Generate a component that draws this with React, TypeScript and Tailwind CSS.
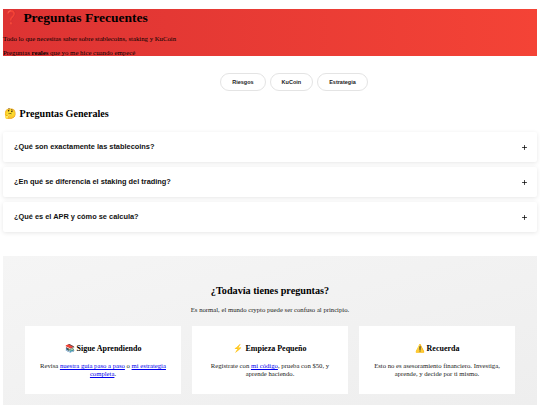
import React from 'react';
import { Plus } from 'lucide-react';

const pills = ['Riesgos', 'KuCoin', 'Estrategia'];

const questions = [
  '¿Qué son exactamente las stablecoins?',
  '¿En qué se diferencia el staking del trading?',
  '¿Qué es el APR y cómo se calcula?',
];

const linkClass = 'text-[#0000ee] underline';

const InfoCard = ({ icon, title, children }: { icon: string; title: string; children: React.ReactNode }) => (
  <div className="bg-white h-[68px] pt-[17px] px-[12px] text-center">
    <h3 className="font-bold text-[8px] leading-[12px] text-black mb-[7px]">
      {icon} {title}
    </h3>
    <p className="text-[6.7px] leading-[8px] text-[#222]">{children}</p>
  </div>
);

export default function App() {
  return (
    <div className="w-[540px] h-[405px] overflow-hidden bg-white font-['Liberation_Serif',serif] text-black">
      <div className="h-[9px]" />
      <header className="mx-[3px] h-[47px] bg-gradient-to-r from-[#dd3333] to-[#f44336]">
        <h1 className="font-bold text-[13.5px] leading-[17px] h-[17px]">
          <span className="text-[#f4544f]">❓</span> Preguntas Frecuentes
        </h1>
        <p className="text-[6.75px] leading-[8px] mt-[9px]">Todo lo que necesitas saber sobre stablecoins, staking y KuCoin</p>
        <p className="text-[6.8px] leading-[8px] mt-[6px]">
          Preguntas <b>reales</b> que yo me hice cuando empecé
        </p>
      </header>

      <nav className="flex justify-center gap-[4px] mt-[17px] pl-[48px] font-['Liberation_Sans',sans-serif]">
        {pills.map(p => (
          <span
            key={p}
            className="h-[18px] px-[11px] flex items-center rounded-full border border-[#e4e4e4] text-[5.5px] font-bold text-[#222]"
          >
            {p}
          </span>
        ))}
      </nav>

      <h2 className="mx-[4px] mt-[15px] font-bold text-[10.1px] leading-[16px]">🤔 Preguntas Generales</h2>

      <div className="mx-[3px] mt-[10px] flex flex-col gap-[5px] font-['Liberation_Sans',sans-serif]">
        {questions.map(q => (
          <div
            key={q}
            className="h-[30px] pl-[11px] pr-[9px] flex items-center justify-between bg-white rounded-[2px] shadow-[0_1px_4px_rgba(0,0,0,0.1)]"
          >
            <span className="text-[7.4px] font-bold text-[#111]">{q}</span>
            <Plus className="w-[7px] h-[7px] text-black" strokeWidth={2.5} />
          </div>
        ))}
      </div>

      <section className="mx-[3px] mt-[24px] h-[150px] bg-gradient-to-br from-[#f5f5f5] to-[#eeeeee] pt-[28px] px-[22px]">
        <h2 className="text-center font-bold text-[10.2px] leading-[14px]">¿Todavía tienes preguntas?</h2>
        <p className="text-center text-[6.7px] leading-[8px] text-[#222] mt-[8px]">
          Es normal, el mundo crypto puede ser confuso al principio.
        </p>
        <div className="grid grid-cols-3 gap-[11px] mt-[12px]">
          <InfoCard icon="📚" title="Sigue Aprendiendo">
            Revisa <a className={linkClass}>nuestra guía paso a paso</a> o <a className={linkClass}>mi estrategia completa</a>.
          </InfoCard>
          <InfoCard icon="⚡" title="Empieza Pequeño">
            Regístrate con <a className={linkClass}>mi código</a>, prueba con $50, y aprende haciendo.
          </InfoCard>
          <InfoCard icon="⚠️" title="Recuerda">
            Esto no es asesoramiento financiero. Investiga, aprende, y decide por ti mismo.
          </InfoCard>
        </div>
      </section>
    </div>
  );
}
